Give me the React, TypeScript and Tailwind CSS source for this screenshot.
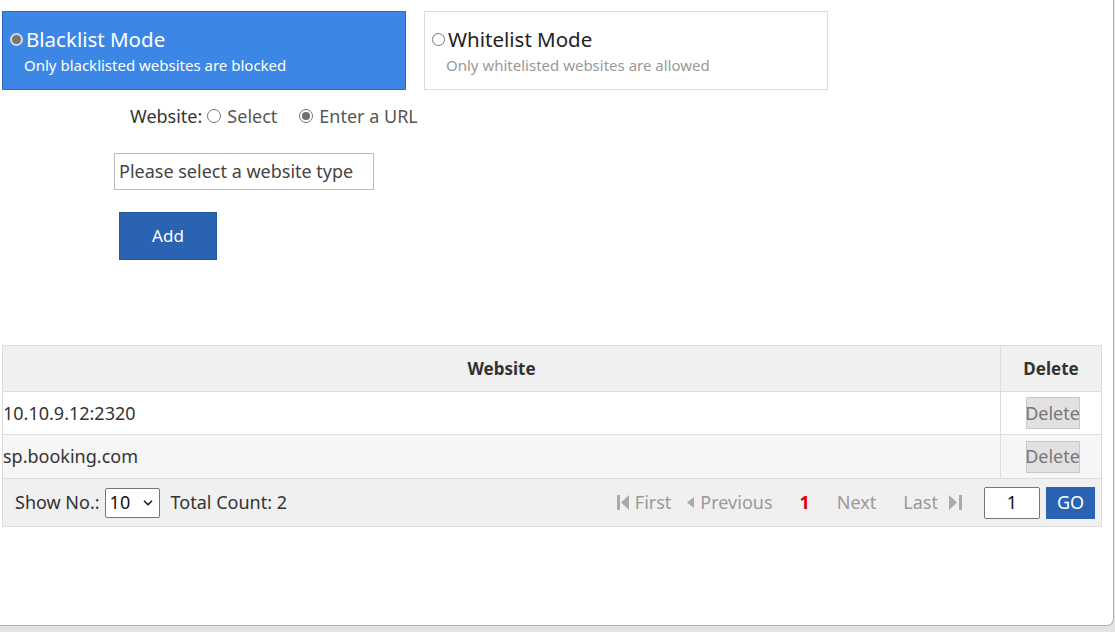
import { ChevronDown } from "lucide-react";

const font = { fontFamily: '"Noto Sans", "Open Sans", sans-serif' };

function ModeCard({
  title,
  desc,
  active,
}: {
  title: string;
  desc: string;
  active: boolean;
}) {
  return (
    <div
      className={
        active
          ? "w-[404px] h-[79px] border border-[#2a6cc4] bg-[#3c87e6] pl-[7px] pt-[15px]"
          : "w-[404px] h-[79px] border border-[#dcdcdc] bg-white pl-[7px] pt-[15px]"
      }
    >
      <div className="flex items-center h-[24px]">
        {active ? (
          <span className="w-[13px] h-[13px] rounded-full bg-[#757575] border-2 border-[#d8d8d8] shrink-0" />
        ) : (
          <span className="w-[13px] h-[13px] rounded-full bg-white border border-[#777] shrink-0" />
        )}
        <span
          className={
            active
              ? "ml-[3px] text-[20.5px] leading-[24px] text-white"
              : "ml-[3px] text-[20.5px] leading-[24px] text-[#222]"
          }
        >
          {title}
        </span>
      </div>
      <div
        className={
          active
            ? "mt-[4px] pl-[14px] text-[15px] leading-[20px] text-white"
            : "mt-[4px] pl-[14px] text-[15px] leading-[20px] text-[#999]"
        }
      >
        {desc}
      </div>
    </div>
  );
}

function Radio({ checked }: { checked?: boolean }) {
  return (
    <span className="w-[14px] h-[14px] rounded-full border border-[#777] bg-white flex items-center justify-center shrink-0">
      {checked && <span className="w-[8px] h-[8px] rounded-full bg-[#6e6e6e]" />}
    </span>
  );
}

function FirstIcon() {
  return (
    <svg width="13" height="15" viewBox="0 0 13 15" fill="#aaa">
      <rect x="0" y="0" width="3" height="15" />
      <polygon points="12,0 12,15 4,7.5" />
    </svg>
  );
}

function PrevIcon() {
  return (
    <svg width="7" height="11" viewBox="0 0 7 11" fill="#aaa">
      <polygon points="7,0 7,11 0,5.5" />
    </svg>
  );
}

function LastIcon() {
  return (
    <svg width="13" height="15" viewBox="0 0 13 15" fill="#aaa">
      <polygon points="0,0 0,15 8,7.5" />
      <rect x="10" y="0" width="3" height="15" />
    </svg>
  );
}

const rows = [
  { site: "10.10.9.12:2320", h: "h-[43px] bg-white" },
  { site: "sp.booking.com", h: "h-[44px] bg-[#f6f6f6]" },
];

export default function App() {
  return (
    <div className="w-[1115px] h-[632px] bg-[#e4e4e4] overflow-hidden" style={font}>
      <div className="w-[1114px] h-[626px] bg-white border-r border-b border-[#b0b0b0] rounded-br-[7px] pt-[11px] pl-[2px]">
        <div className="flex gap-[18px]">
          <ModeCard
            title="Blacklist Mode"
            desc="Only blacklisted websites are blocked"
            active
          />
          <ModeCard
            title="Whitelist Mode"
            desc="Only whitelisted websites are allowed"
            active={false}
          />
        </div>

        <div className="mt-[13px] ml-[128px] flex items-center h-[26px] text-[18px] text-[#333]">
          <span>Website:</span>
          <span className="ml-[5px]">
            <Radio />
          </span>
          <span className="ml-[6px] text-[#555]">Select</span>
          <span className="ml-[22px]">
            <Radio checked />
          </span>
          <span className="ml-[6px] text-[#555]">Enter a URL</span>
        </div>

        <div className="mt-[24px] ml-[112px] w-[260px] h-[37px] border border-[#bbb] flex items-center pl-[4px] text-[18px] text-[#444]">
          Please select a website type
        </div>

        <button className="mt-[22px] ml-[117px] w-[98px] h-[48px] bg-[#2a63b2] border border-[#1f5a9c] text-white text-[17px] flex items-center justify-center">
          Add
        </button>

        <div className="mt-[85px] w-[1100px] border border-[#dcdcdc]">
          <div className="flex h-[46px] bg-[#f0f0f0] text-[17px] font-bold text-[#333] border-b border-[#dcdcdc]">
            <div className="flex-1 flex items-center justify-center">Website</div>
            <div className="w-[101px] border-l border-[#dcdcdc] flex items-center justify-center">
              Delete
            </div>
          </div>
          {rows.map((r) => (
            <div key={r.site} className={`flex border-b border-[#dcdcdc] ${r.h}`}>
              <div className="flex-1 flex items-center text-[18px] text-[#333]">{r.site}</div>
              <div className="w-[101px] border-l border-[#dcdcdc] flex items-center justify-center pl-[3px]">
                <button className="w-[54px] h-[32px] bg-[#e1e1e1] border border-[#c8c8c8] text-[18px] text-[#777] flex items-center justify-center">
                  Delete
                </button>
              </div>
            </div>
          ))}
          <div className="flex items-center h-[47px] bg-[#f0f0f0] text-[18px]">
            <span className="ml-[12px] text-[#333]">Show No.:</span>
            <div className="ml-[5px] w-[55px] h-[30px] border border-[#767676] rounded-[2px] bg-white flex items-center justify-between pl-[4px] pr-[4px] text-[#111]">
              <span>10</span>
              <ChevronDown size={14} strokeWidth={3} color="#222" />
            </div>
            <span className="ml-[11px] text-[#333]">Total Count: 2</span>
            <div className="flex-1" />
            <div className="flex items-center text-[#999]">
              <FirstIcon />
              <span className="ml-[5px]">First</span>
              <span className="ml-[16px]">
                <PrevIcon />
              </span>
              <span className="ml-[6px]">Previous</span>
              <span className="ml-[27px] text-[#e00000] font-bold">1</span>
              <span className="ml-[27px]">Next</span>
              <span className="ml-[27px]">Last</span>
              <span className="ml-[11px]">
                <LastIcon />
              </span>
            </div>
            <div className="ml-[22px] w-[56px] h-[32px] border border-[#767676] rounded-[2px] bg-white flex items-center justify-center text-[#111]">
              1
            </div>
            <button className="ml-[6px] mr-[6px] w-[49px] h-[32px] bg-[#2a63b2] text-white text-[18px] flex items-center justify-center">
              GO
            </button>
          </div>
        </div>
      </div>
    </div>
  );
}
